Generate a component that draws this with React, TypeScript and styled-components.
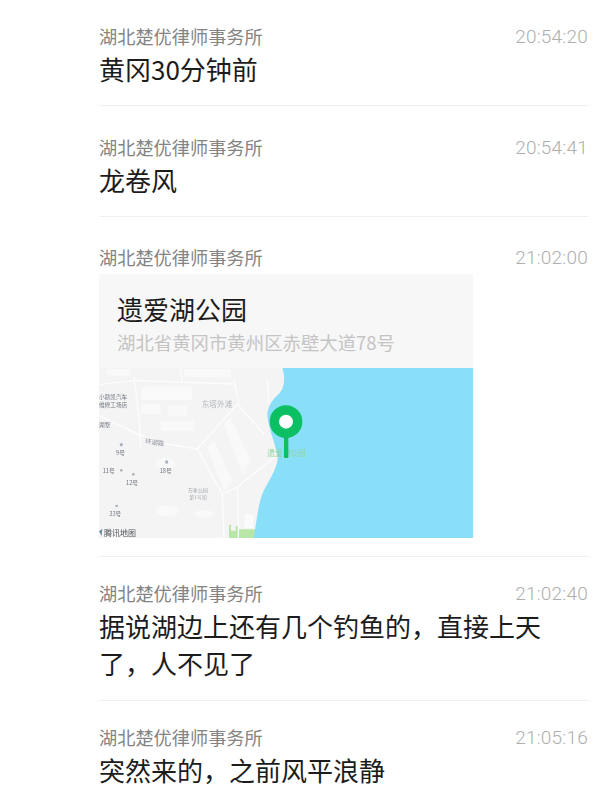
import React from "react";
import styled, { createGlobalStyle } from "styled-components";

const Global = createGlobalStyle`
  html, body { margin: 0; padding: 0; background: #fff; }
  body { font-family: "Noto Sans CJK SC", "Noto Sans", sans-serif; }
`;

const Page = styled.main`
  width: 614px;
  height: 800px;
  overflow: hidden;
  padding: 22px 25px 0 99px;
  box-sizing: border-box;
`;

const Row = styled.article<{ $pad: number; $gap: number }>`
  padding-bottom: ${(p) => p.$pad}px;
  margin-bottom: ${(p) => p.$gap}px;
  border-bottom: 1px solid #f0f0f0;
  &:last-child { border-bottom: none; }
`;

const Header = styled.header`
  display: flex;
  justify-content: space-between;
  align-items: center;
  height: 28px;
`;

const Name = styled.span`
  font-size: 18.2px;
  line-height: 28px;
  color: #848484;
`;

const Time = styled.time`
  font-family: Roboto, sans-serif;
  font-weight: 300;
  font-size: 19px;
  letter-spacing: 0.2px;
  line-height: 28px;
  padding: 1px 1px 0 0;
  color: #aeaeae;
`;

const Message = styled.p`
  margin: 0;
  font-size: 26px;
  line-height: 37px;
  color: #1c1c1c;
`;

const Card = styled.section`
  width: 374px;
  margin-top: 3px;
  background: #f7f7f7;
`;

const CardHead = styled.div`
  height: 94px;
  box-sizing: border-box;
  padding: 16px 18px 0;
`;

const Place = styled.h3`
  margin: 0;
  font-weight: 400;
  font-size: 26px;
  line-height: 38px;
  color: #1c1c1c;
`;

const Address = styled.p`
  margin: 0;
  font-size: 18.4px;
  line-height: 28px;
  color: #c4c4c4;
`;

const MapArt = styled.svg`
  display: block;
  width: 374px;
  height: 170px;
`;

const MapImage = () => (
  <MapArt viewBox="25 22 1122 510" role="img" aria-label="地图">
    <defs>
      <filter id="soft" x="-5%" y="-5%" width="110%" height="110%">
        <feGaussianBlur stdDeviation="2" />
      </filter>
      <filter id="textsoft">
        <feGaussianBlur stdDeviation="0.7" />
      </filter>
    </defs>
    <g filter="url(#soft)">
      <rect x="0" y="0" width="1200" height="560" fill="#f4f4f5" />
      <g fill="#f9f9fa">
        <rect x="150" y="80" width="155" height="38" />
        <rect x="150" y="130" width="60" height="30" />
        <rect x="232" y="135" width="58" height="30" />
        <rect x="280" y="25" width="140" height="25" />
        <rect x="50" y="25" width="70" height="20" />
        <path d="M420 170l60 130-25 40-55-150z" />
        <path d="M370 240l55 120-25 30-50-130z" />
        <ellipse cx="225" cy="310" rx="30" ry="18" />
        <ellipse cx="230" cy="450" rx="35" ry="16" />
        <ellipse cx="340" cy="460" rx="30" ry="12" />
        <rect x="210" y="180" width="100" height="30" />
      </g>
      <g fill="none" stroke="#fdfdfd" strokeWidth="4" strokeLinecap="round" strokeLinejoin="round">
        <path d="M25 165 120 210 200 245 320 265 440 130 520 220" />
        <path d="M320 265 395 400 440 380 550 290" />
        <path d="M395 400 400 532" />
        <path d="M440 380 445 532" />
        <path d="M430 60 445 130" />
        <path d="M135 60 430 70" />
        <path d="M130 50 145 170 150 262" />
        <path d="M270 22 275 60" />
        <path d="M530 60 535 130" />
        <path d="M25 72 130 60" />
      </g>
      <rect x="462" y="462" width="26" height="40" fill="#fbfbfb" />
      <path d="M415 532V492h6v18h14v-14h6v36zM445 532V506h50l-6 26z" fill="#b8e6a8" />
      <path d="M575 22C584 50 582 82 566 98C548 116 534 130 530 160C532 200 548 230 562 290C558 330 530 365 515 400C500 440 498 490 488 532H1147V22Z" fill="#8adff8" />
    </g>
    <g fontFamily="'Noto Sans CJK SC', sans-serif" fill="#6f7680" fontSize="17" filter="url(#textsoft)">
      <text x="25" y="115">小鹅凯汽车</text>
      <text x="25" y="139">维修工场店</text>
      <text x="25" y="198">湖墅</text>
      <text x="76" y="284">9号</text>
      <text x="36" y="336">11号</text>
      <text x="106" y="373">12号</text>
      <text x="207" y="337">18号</text>
      <text x="56" y="466">33号</text>
      <text x="163" y="248" fill="#8a9098" fontSize="19" transform="rotate(8 163 248)">环湖路</text>
      <text x="333" y="139" fill="#b4b8bd" fontSize="23">东塔外滩</text>
      <text x="292" y="394" fill="#a6abb1" fontSize="15">万象公园</text>
      <text x="296" y="415" fill="#a6abb1" fontSize="15">第1号馆</text>
      <text x="530" y="287" fill="#8fd59a" fontSize="23">遗爱湖公园</text>
      <text x="40" y="525" fill="#50555b" fontSize="24">腾讯地图</text>
    </g>
    <path d="M25 512l10-8-2 22z" fill="#6f8f9f" />
    <circle cx="92" cy="252" r="5" fill="#aab2ba" />
    <circle cx="92" cy="329" r="4" fill="#aab2ba" />
    <circle cx="128" cy="341" r="4" fill="#aab2ba" />
    <circle cx="228" cy="304" r="5" fill="#aab2ba" />
    <circle cx="78" cy="436" r="4" fill="#aab2ba" />
    <rect x="580" y="225" width="13" height="67" rx="3" fill="#0cbf62" />
    <circle cx="586" cy="183" r="35" fill="#fff" stroke="#0cbf62" strokeWidth="28" />
  </MapArt>
);

const TextEntry = ({ time, pad, gap, lines }: { time: string; pad: number; gap: number; lines: string[] }) => (
  <Row $pad={pad} $gap={gap}>
    <Header>
      <Name>湖北楚优律师事务所</Name>
      <Time>{time}</Time>
    </Header>
    {lines.map((l) => (
      <Message key={l}>{l}</Message>
    ))}
  </Row>
);

export default function App() {
  return (
    <Page>
      <Global />
      <TextEntry time="20:54:20" pad={18} gap={27} lines={["黄冈30分钟前"]} />
      <TextEntry time="20:54:41" pad={18} gap={26} lines={["龙卷风"]} />
      <Row $pad={18} $gap={22}>
        <Header>
          <Name>湖北楚优律师事务所</Name>
          <Time>21:02:00</Time>
        </Header>
        <Card>
          <CardHead>
            <Place>遗爱湖公园</Place>
            <Address>湖北省黄冈市黄州区赤壁大道78号</Address>
          </CardHead>
          <MapImage />
        </Card>
      </Row>
      <TextEntry time="21:02:40" pad={19} gap={22} lines={["据说湖边上还有几个钓鱼的，直接上天", "了，人不见了"]} />
      <TextEntry time="21:05:16" pad={16} gap={0} lines={["突然来的，之前风平浪静"]} />
    </Page>
  );
}
